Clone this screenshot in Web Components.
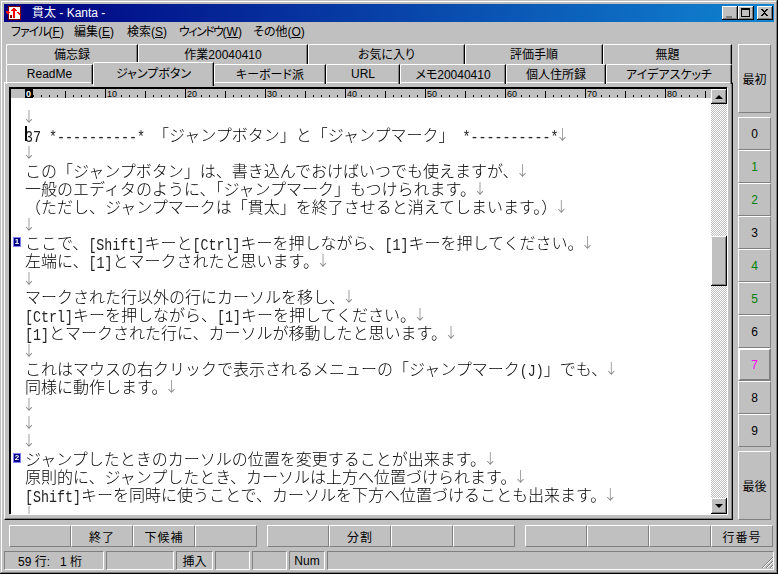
<!DOCTYPE html>
<html lang="ja">
<head>
<meta charset="utf-8">
<title>貫太 - Kanta -</title>
<style>
html, body { margin: 0; padding: 0; background: #c0c0c0; }
body { width: 778px; height: 574px; overflow: hidden; font: 12px "Liberation Sans", "Noto Sans CJK JP", sans-serif; color: #000; }
</style>
</head>
<body>
<kanta-window>
  <title-bar slot="title">貫太 - Kanta -</title-bar>
  <menu-bar slot="menu">
    <menu-item style="width:49px" tight="-1" label="ファイル" key="F"></menu-item>
    <menu-item style="width:39px" label="編集" key="E"></menu-item>
    <menu-item style="width:38px" label="検索" key="S"></menu-item>
    <menu-item style="width:60px" tight="-1.5" label="ウィンドウ" key="W"></menu-item>
    <menu-item label="その他" key="O"></menu-item>
  </menu-bar>

  <tab-row slot="tabs">
    <page-tab style="width:132px">備忘録</page-tab>
    <page-tab style="width:170px">作業20040410</page-tab>
    <page-tab style="width:157px">お気に入り</page-tab>
    <page-tab style="width:138px">評価手順</page-tab>
    <page-tab style="width:129px">無題</page-tab>
  </tab-row>
  <tab-row slot="tabs">
    <page-tab style="width:87px">ReadMe</page-tab>
    <page-tab style="width:121px" selected>ジャンプボタン</page-tab>
    <page-tab style="width:112px">キーボード派</page-tab>
    <page-tab style="width:74px">URL</page-tab>
    <page-tab style="width:106px">メモ20040410</page-tab>
    <page-tab style="width:100px">個人住所録</page-tab>
    <page-tab style="width:126px">アイデアスケッチ</page-tab>
  </tab-row>

  <text-editor slot="page">
    <edit-line>↓</edit-line>
    <edit-line caret>37 *----------*　「ジャンプボタン」と「ジャンプマーク」　*----------*↓</edit-line>
    <edit-line>↓</edit-line>
    <edit-line>この「ジャンプボタン」は、書き込んでおけばいつでも使えますが、↓</edit-line>
    <edit-line>一般のエディタのように、「ジャンプマーク」もつけられます。↓</edit-line>
    <edit-line>（ただし、ジャンプマークは「貫太」を終了させると消えてしまいます。）↓</edit-line>
    <edit-line>↓</edit-line>
    <edit-line mark="1">ここで、[Shift]キーと[Ctrl]キーを押しながら、[1]キーを押してください。↓</edit-line>
    <edit-line>左端に、[1]とマークされたと思います。↓</edit-line>
    <edit-line>↓</edit-line>
    <edit-line>マークされた行以外の行にカーソルを移し、↓</edit-line>
    <edit-line>[Ctrl]キーを押しながら、[1]キーを押してください。↓</edit-line>
    <edit-line>[1]とマークされた行に、カーソルが移動したと思います。↓</edit-line>
    <edit-line>↓</edit-line>
    <edit-line>これはマウスの右クリックで表示されるメニューの「ジャンプマーク(J)」でも、↓</edit-line>
    <edit-line>同様に動作します。↓</edit-line>
    <edit-line>↓</edit-line>
    <edit-line>↓</edit-line>
    <edit-line>↓</edit-line>
    <edit-line mark="2">ジャンプしたときのカーソルの位置を変更することが出来ます。↓</edit-line>
    <edit-line>原則的に、ジャンプしたとき、カーソルは上方へ位置づけられます。↓</edit-line>
    <edit-line>[Shift]キーを同時に使うことで、カーソルを下方へ位置づけることも出来ます。↓</edit-line>
    <edit-line>↓</edit-line>
  </text-editor>

  <jump-bar slot="side">
    <jump-button tall>最初</jump-button>
    <jump-button class="gap"></jump-button>
    <jump-button>0</jump-button>
    <jump-button color="#008000">1</jump-button>
    <jump-button color="#008000">2</jump-button>
    <jump-button>3</jump-button>
    <jump-button color="#008000">4</jump-button>
    <jump-button color="#008000">5</jump-button>
    <jump-button>6</jump-button>
    <jump-button color="#ff00ff" raised>7</jump-button>
    <jump-button>8</jump-button>
    <jump-button>9</jump-button>
    <jump-button class="gap"></jump-button>
    <jump-button tall>最後</jump-button>
  </jump-bar>

  <func-bar slot="func">
    <func-group><func-key></func-key><func-key>終了</func-key><func-key>下候補</func-key><func-key></func-key></func-group>
    <func-group><func-key></func-key><func-key>分割</func-key><func-key></func-key><func-key></func-key></func-group>
    <func-group><func-key></func-key><func-key></func-key><func-key></func-key><func-key>行番号</func-key></func-group>
  </func-bar>

  <status-bar slot="status">
    <status-cell style="width:100px;padding-left:13px">59 行:&nbsp;&nbsp; 1 桁</status-cell>
    <status-cell style="width:68px"></status-cell>
    <status-cell style="width:37px;justify-content:center">挿入</status-cell>
    <status-cell style="width:35px"></status-cell>
    <status-cell style="width:35px"></status-cell>
    <status-cell style="width:36px;justify-content:center">Num</status-cell>
    <status-cell style="flex:1"></status-cell>
  </status-bar>
</kanta-window>

<script>
function shadow(el, html) {
  el.attachShadow({ mode: 'open' }).innerHTML = html;
}

class KantaWindow extends HTMLElement {
  constructor() {
    super();
    shadow(this, `
<style>
:host {
  display: flex;
  flex-direction: column;
  box-sizing: border-box;
  width: 778px;
  height: 574px;
  padding: 4px;
  background: #c0c0c0;
  box-shadow: inset -1px -1px 0 #000, inset 1px 1px 0 #c0c0c0, inset -2px -2px 0 #808080, inset 2px 2px 0 #fff;
}
.main { display: flex; height: 480px; flex: none; }
.left { width: 729px; margin-top: 2px; display: flex; flex-direction: column; }
.tabs { display: flex; flex-direction: column; height: 38px; flex: none; padding-left: 2px; }
.page {
  display: flex;
  height: 438px;
  flex: none;
  box-sizing: border-box;
  padding: 4px 5px 5px 4px;
  border: 1px solid;
  border-color: #fff #000 #000 #fff;
  box-shadow: inset -1px -1px 0 #808080;
}
</style>
<slot name="title"></slot>
<slot name="menu"></slot>
<div class="main">
  <div class="left">
    <div class="tabs"><slot name="tabs"></slot></div>
    <div class="page"><slot name="page"></slot></div>
  </div>
  <slot name="side"></slot>
</div>
<slot name="func"></slot>
<slot name="status"></slot>`);
  }
}
customElements.define('kanta-window', KantaWindow);

class TitleBar extends HTMLElement {
  constructor() {
    super();
    const box = (inner) => `<span class="btn">${inner}</span>`;
    shadow(this, `
<style>
:host {
  display: flex;
  align-items: center;
  flex: none;
  height: 18px;
  background: linear-gradient(90deg, #000080, #1084d0);
  color: #fff;
  font: 12px "Liberation Sans", "Noto Sans CJK JP", sans-serif;
}
.icon { display: block; margin: 0 10px 0 2px; }
.text { flex: 1; white-space: pre; line-height: 18px; }
.btns { display: flex; margin-right: 1px; }
.btn {
  display: block;
  width: 16px;
  height: 14px;
  background: #c0c0c0;
  box-shadow: inset -1px -1px 0 #000, inset 1px 1px 0 #fff, inset -2px -2px 0 #808080;
}
.btn:last-child { margin-left: 3px; }
svg { display: block; }
</style>
<svg class="icon" width="16" height="16" viewBox="0 0 16 16" shape-rendering="crispEdges">
  <rect x="2" y="1" width="13" height="14" fill="#800000"/>
  <rect x="3" y="2" width="11" height="12" fill="#fff"/>
  <path d="M0 6h3v1h1v1H3v1H1V8H0z" fill="#ff0000"/>
  <path d="M7 3h2v1h1v1h1v1H9v7H7V6H5V5h1V4h1z" fill="#ff0000"/>
  <path d="M11 7h2v1h1v1h1v1h-2V9h-1V8h-1z" fill="#ff0000"/>
  <path d="M4 10h2v3H4z" fill="#800000"/>
</svg>
<span class="text"><slot></slot></span>
<span class="btns">
  ${box('<svg width="16" height="14" shape-rendering="crispEdges"><rect x="4" y="10" width="6" height="2" fill="#808080"/></svg>')}
  ${box('<svg width="16" height="14" shape-rendering="crispEdges"><path d="M3 2h9v9H3z M4 4v6h7V4z" fill-rule="evenodd" fill="#000"/></svg>')}
  ${box('<svg width="16" height="14" shape-rendering="crispEdges"><path d="M4 3h2v1h1v1h1V4h1V3h2v1h-1v1H9v1H8v1h1v1h1v1h1v1H9V9H8V8H7v1H6v1H4V9h1V8h1V7h1V6H6V5H5V4H4z" fill="#000"/></svg>')}
</span>`);
  }
}
customElements.define('title-bar', TitleBar);

class MenuBar extends HTMLElement {
  constructor() {
    super();
    shadow(this, `
<style>
:host { display: flex; align-items: center; flex: none; height: 20px; gap: 14px; padding-left: 7px; }
</style>
<slot></slot>`);
  }
}
customElements.define('menu-bar', MenuBar);

class MenuItem extends HTMLElement {
  connectedCallback() {
    if (this.shadowRoot) return;
    const tight = this.getAttribute('tight') || 0;
    shadow(this, `
<style>
:host {
  display: block;
  font-feature-settings: "palt";
  white-space: nowrap;
  line-height: 18px;
}
span { letter-spacing: ${tight}px; }
</style>
<span>${this.getAttribute('label')}</span>(<u>${this.getAttribute('key')}</u>)`);
  }
}
customElements.define('menu-item', MenuItem);

class TabRow extends HTMLElement {
  constructor() {
    super();
    shadow(this, `
<style>
:host { display: flex; height: 20px; flex: none; }
</style>
<slot></slot>`);
  }
}
customElements.define('tab-row', TabRow);

class PageTab extends HTMLElement {
  constructor() {
    super();
    shadow(this, `
<style>
:host {
  display: flex;
  align-items: center;
  justify-content: center;
  box-sizing: border-box;
  height: 20px;
  padding-bottom: 2px;
  border-top: 1px solid #fff;
  border-left: 1px solid #fff;
  border-right: 1px solid #000;
  border-top-left-radius: 2px;
  box-shadow: inset -1px 0 0 #808080;
  font-feature-settings: "palt";
  white-space: nowrap;
  position: relative;
}
:host([selected]) {
  height: 24px;
  margin-top: -2px;
  padding-bottom: 4px;
  background: #c0c0c0;
  z-index: 1;
}
</style>
<slot></slot>`);
  }
}
customElements.define('page-tab', PageTab);

class TextEditor extends HTMLElement {
  constructor() {
    super();
    shadow(this, `
<style>
:host {
  display: grid;
  flex: 1;
  min-width: 0;
  grid-template-columns: 1fr 16px;
  grid-template-rows: 9px 1fr;
  box-sizing: border-box;
  height: 100%;
  border-left: 2px solid #000;
  border-top: 2px solid #000;
  box-shadow: 1px 1px 0 #fff;
  background: #fff;
  overflow: hidden;
}
.ruler { background: #c0c0c0; overflow: hidden; height: 9px; }
.ruler svg { display: block; }
.text { grid-row: 2; padding-top: 9px; overflow: hidden; min-height: 0; }
.track {
  grid-column: 2;
  grid-row: 1 / span 2;
  display: flex;
  flex-direction: column;
  background-color: #fff;
  background-image: conic-gradient(#c0c0c0 25%, #fff 0 50%, #c0c0c0 0 75%, #fff 0);
  background-size: 2px 2px;
  min-height: 0;
}
.sb {
  box-sizing: border-box;
  width: 16px;
  height: 15px;
  background: #c0c0c0;
  box-shadow: inset -1px -1px 0 #000, inset 1px 1px 0 #fff, inset -2px -2px 0 #808080;
  display: flex;
  align-items: center;
  justify-content: center;
  flex: none;
}
.thumb { height: 50px; margin-top: 132px; }
.down { margin-top: auto; height: 16px; }
.tri-up { width: 0; height: 0; border: 4px solid transparent; border-top: 0; border-bottom: 4px solid #000; }
.tri-down { width: 0; height: 0; border: 4px solid transparent; border-bottom: 0; border-top: 4px solid #000; }
</style>
<div class="ruler"><svg id="r" width="700" height="9" font-family="Liberation Sans" font-size="9" shape-rendering="crispEdges"></svg></div>
<div class="text"><slot></slot></div>
<div class="track">
  <div class="sb"><div class="tri-up"></div></div>
  <div class="sb thumb"></div>
  <div class="sb down"><div class="tri-down"></div></div>
</div>`);
  }

  connectedCallback() {
    const left = 14; // column 0 starts after the mark gutter
    let out = '';
    for (let col = 0; col <= 85; col++) {
      const x = left + col * 8;
      if (col === 0) {
        out += `<rect x="${x}" y="0" width="8" height="9" fill="#000"/><text x="${x + 1}" y="8" fill="#fff" font-weight="bold">0</text>`;
      } else if (col % 10 === 0) {
        out += `<rect x="${x}" y="0" width="1" height="9" fill="#000"/><text x="${x + 2}" y="8">${col}</text>`;
      } else if (col % 10 >= 2 || col < 10) {
        const tall = col % 5 === 0;
        out += `<rect x="${x}" y="${tall ? 2 : 6}" width="1" height="${tall ? 7 : 2}" fill="#000"/>`;
      }
    }
    this.shadowRoot.getElementById('r').innerHTML = out;
  }
}
customElements.define('text-editor', TextEditor);

class EditLine extends HTMLElement {
  connectedCallback() {
    if (this.shadowRoot) return;
    const parts = this.textContent.split(/([\x20-\x7e]+|↓)/).filter(Boolean);
    const body = parts.map((part) => {
      if (part === '↓') return '<span class="nl">↓</span>';
      if (/^[\x20-\x7e]/.test(part)) return `<span class="han">${part}</span>`;
      return part;
    }).join('');
    const mark = this.getAttribute('mark');
    shadow(this, `
<style>
:host {
  display: flex;
  height: 18px;
  font: 300 16px/18px "Noto Sans CJK JP", sans-serif;
  white-space: pre;
  position: relative;
}
.gutter { width: 14px; flex: none; display: flex; align-items: center; }
.mark {
  display: block;
  box-sizing: border-box;
  width: 8px;
  height: 10px;
  margin-left: 2px;
  background: #000080;
  border: 1px solid #8080ff;
  color: #fff;
  font: bold 8px/8px "Liberation Sans", sans-serif;
  text-align: center;
}
/* half width cells on the 8px column grid, stretched to the height of the bitmap font */
.han { display: inline-block; font: 400 13.333px/18px "Liberation Mono", monospace; color: #222; transform: scaleY(1.22); }
.nl {
  display: inline-block;
  position: relative;
  top: -2px;
  width: 8px;
  text-indent: -3px;
  font: 300 14px/18px "Noto Sans CJK JP", sans-serif;
  color: #808080;
  opacity: 0.999; /* keeps the thin stem free of colour fringes */
  will-change: opacity;
}
.caret { position: absolute; left: 14px; top: 1px; width: 2px; height: 15px; background: #000; }
</style>
<span class="gutter">${mark ? `<span class="mark">${mark}</span>` : ''}</span>
<span>${body}</span>
${this.hasAttribute('caret') ? '<span class="caret"></span>' : ''}`);
  }
}
customElements.define('edit-line', EditLine);

class JumpBar extends HTMLElement {
  constructor() {
    super();
    shadow(this, `
<style>
:host { display: flex; flex-direction: column; margin: 2px 0 0 5px; width: 33px; }
</style>
<slot></slot>`);
  }
}
customElements.define('jump-bar', JumpBar);

class JumpButton extends HTMLElement {
  connectedCallback() {
    if (this.shadowRoot) return;
    const color = this.getAttribute('color') || '#000';
    shadow(this, `
<style>
:host {
  display: flex;
  align-items: center;
  justify-content: center;
  box-sizing: border-box;
  flex: none;
  height: 33px;
  color: ${color};
  border-top: 1px solid #fff;
  border-left: 1px solid #fff;
  border-right: 1px solid #808080;
  border-bottom: 1px solid #808080;
  font-size: 12px;
}
:host([tall]) { height: 69px; }
:host(.gap) { height: 4px; border: 0; }
:host([raised]) { border-width: 2px; border-color: #fff #808080 #808080 #fff; }
</style>
<slot></slot>`);
  }
}
customElements.define('jump-button', JumpButton);

class FuncBar extends HTMLElement {
  constructor() {
    super();
    shadow(this, `
<style>
:host { display: flex; flex: none; gap: 10px; height: 22px; margin-top: 3px; padding-left: 5px; }
</style>
<slot></slot>`);
  }
}
customElements.define('func-bar', FuncBar);

class FuncGroup extends HTMLElement {
  constructor() {
    super();
    shadow(this, `
<style>
:host { display: flex; }
</style>
<slot></slot>`);
  }
}
customElements.define('func-group', FuncGroup);

class FuncKey extends HTMLElement {
  constructor() {
    super();
    shadow(this, `
<style>
:host {
  display: flex;
  align-items: center;
  justify-content: center;
  box-sizing: border-box;
  width: 62px;
  height: 22px;
  border-top: 1px solid #fff;
  border-left: 1px solid #fff;
  border-right: 1px solid #808080;
  border-bottom: 1px solid #808080;
  letter-spacing: 1px;
}
</style>
<slot></slot>`);
  }
}
customElements.define('func-key', FuncKey);

class StatusBar extends HTMLElement {
  constructor() {
    super();
    shadow(this, `
<style>
:host { display: flex; flex: none; gap: 2px; height: 19px; margin-top: 4px; position: relative; }
svg { position: absolute; right: 0; bottom: 1px; }
</style>
<slot></slot>
<svg width="13" height="13" shape-rendering="crispEdges">
  <path d="M12 1L1 12M12 5L5 12M12 9L9 12" stroke="#808080" fill="none"/>
  <path d="M12 2L2 12M12 6L6 12M12 10L10 12" stroke="#fff" fill="none"/>
</svg>`);
  }
}
customElements.define('status-bar', StatusBar);

class StatusCell extends HTMLElement {
  constructor() {
    super();
    shadow(this, `
<style>
:host {
  display: flex;
  align-items: center;
  box-sizing: border-box;
  height: 19px;
  border-top: 1px solid #808080;
  border-left: 1px solid #808080;
  border-right: 1px solid #fff;
  border-bottom: 1px solid #fff;
  white-space: nowrap;
}
</style>
<slot></slot>`);
  }
}
customElements.define('status-cell', StatusCell);
</script>
</body>
</html>
